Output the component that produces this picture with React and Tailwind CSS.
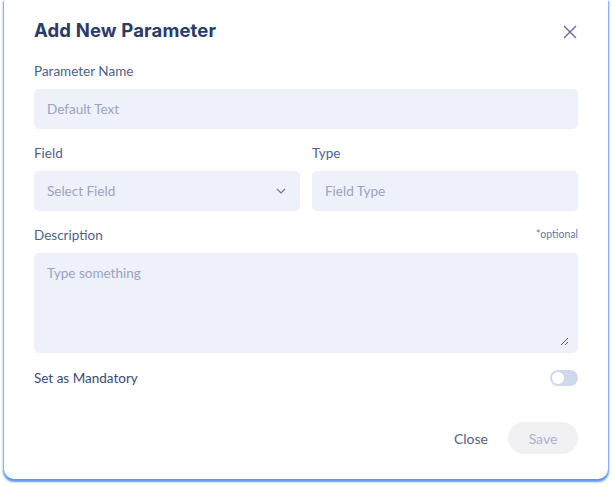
import React, { useState } from 'react';

const AddParameterModal = () => {
  const [mandatory, setMandatory] = useState(false);

  return (
    <div className="w-[612px] h-[487px] bg-white" style={{ fontFamily: 'Lato, "Open Sans", sans-serif' }}>
      <div className="ml-[4px] w-[604px] h-[479px] bg-white rounded-b-[10px] shadow-[0_2px_2px_1px_rgba(66,133,244,0.85)] px-[30px] pt-[18px]">
        {/* Header */}
        <div className="flex items-center justify-between h-[26px]">
          <h2 className="text-[18.5px] font-bold text-[#2b3a67] tracking-[0.15px]" style={{ fontFamily: 'Inter, sans-serif' }}>
            Add New Parameter
          </h2>
          <button className="mr-[1px] mt-[2px] text-[#5b6b99]">
            <svg width="14" height="14" viewBox="0 0 14 14" fill="none" stroke="currentColor" strokeWidth="1.3">
              <path d="M1 1L13 13M13 1L1 13" />
            </svg>
          </button>
        </div>

        {/* Parameter Name */}
        <div className="mt-[18px] text-[13.5px] text-[#52618a] h-[18px] leading-[18px]">Parameter Name</div>
        <div className="mt-[9px] h-[40px] rounded-[5px] bg-[#eef1fa] flex items-center px-[13px] text-[13.5px] text-[#9aa3bf]">
          Default Text
        </div>

        {/* Field / Type */}
        <div className="mt-[15px] grid grid-cols-2 gap-[12px]">
          <div>
            <div className="text-[13.5px] text-[#52618a] h-[18px] leading-[18px]">Field</div>
            <div className="mt-[9px] h-[40px] rounded-[5px] bg-[#eef1fa] flex items-center justify-between px-[13px] text-[13.5px] text-[#9aa3bf]">
              <span>Select Field</span>
              <svg width="12" height="8" viewBox="0 0 12 8" fill="none" stroke="#6b789e" strokeWidth="1.2">
                <path d="M2 2L6 6L10 2" />
              </svg>
            </div>
          </div>
          <div>
            <div className="text-[13.5px] text-[#52618a] h-[18px] leading-[18px]">Type</div>
            <div className="mt-[9px] h-[40px] rounded-[5px] bg-[#eef1fa] flex items-center px-[13px] text-[13.5px] text-[#9aa3bf]">
              Field Type
            </div>
          </div>
        </div>

        {/* Description */}
        <div className="mt-[15px] flex items-center justify-between h-[18px]">
          <span className="text-[13.5px] text-[#52618a]">Description</span>
          <span className="text-[10.5px] text-[#6b789e]">*optional</span>
        </div>
        <div className="relative mt-[9px] h-[100px] rounded-[5px] bg-[#eef1fa] px-[13px] pt-[10px] text-[13.5px] text-[#9aa3bf]">
          Type something
          <svg className="absolute right-[9px] bottom-[7px]" width="9" height="9" viewBox="0 0 9 9" stroke="#4b4b4b" strokeWidth="0.9">
            <path d="M8 1L1 8M8 5L5 8" />
          </svg>
        </div>

        {/* Mandatory */}
        <div className="mt-[16px] flex items-center justify-between h-[18px]">
          <span className="text-[13.5px] text-[#3b4a75]">Set as Mandatory</span>
          <button
            onClick={() => setMandatory(!mandatory)}
            className={`w-[28px] h-[16px] rounded-full p-[2px] flex ${mandatory ? 'bg-[#3b82f6] justify-end' : 'bg-[#cfd9ee] justify-start'}`}
          >
            <span className="w-[12px] h-[12px] rounded-full bg-white" />
          </button>
        </div>

        {/* Footer */}
        <div className="mt-[35px] flex items-center justify-end gap-[20px]">
          <button className="text-[14px] text-[#52618a]">Close</button>
          <button className="w-[70px] h-[32px] rounded-full bg-[#f1f1f4] text-[14px] text-[#aab2cb]">Save</button>
        </div>
      </div>
    </div>
  );
};

export default AddParameterModal;
